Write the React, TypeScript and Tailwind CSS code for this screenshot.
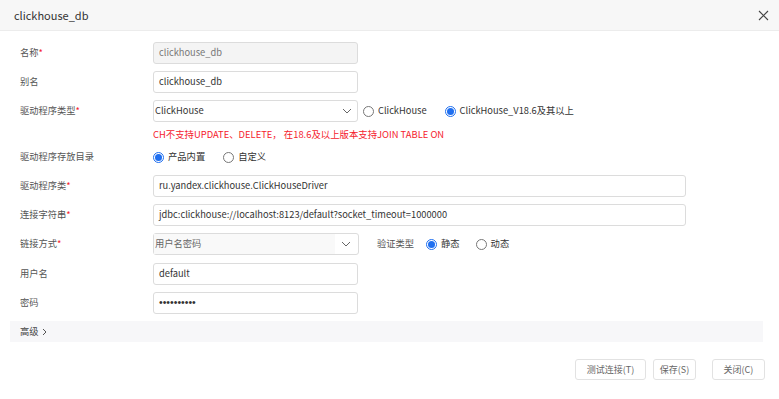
import React from "react";

const font = { fontFamily: '"Noto Sans CJK SC", "Noto Sans", sans-serif' };

function Chevron() {
  return (
    <svg width="10" height="6" viewBox="0 0 10 6" className="shrink-0">
      <path d="M1 1l4 4 4-4" fill="none" stroke="#666" strokeWidth="1" />
    </svg>
  );
}

function Radio({ checked, label }: { checked?: boolean; label: string }) {
  return (
    <span className="flex items-center gap-[4px] text-[9.3px] text-[#333]">
      {checked ? (
        <span className="w-[11px] h-[11px] rounded-full border border-[#1f6ff0] flex items-center justify-center">
          <span className="w-[7px] h-[7px] rounded-full bg-[#1f6ff0]" />
        </span>
      ) : (
        <span className="w-[11px] h-[11px] rounded-full border border-[#777] bg-white" />
      )}
      <span>{label}</span>
    </span>
  );
}

function Label({ text, req }: { text: string; req?: boolean }) {
  return (
    <div className="w-[153px] pl-[20px] shrink-0 text-[9.25px] text-[#555]">
      {text}
      {req && <span className="text-[#f5222d]">*</span>}
    </div>
  );
}

function Input({ value, w, disabled }: { value: string; w: string; disabled?: boolean }) {
  return (
    <div
      className={`${w} h-[22px] border border-[#dcdcdc] rounded-[3px] flex items-center px-[5px] text-[9.3px] ${
        disabled ? "bg-[#f4f4f4] text-[#777]" : "bg-white text-[#333]"
      }`}
    >
      {value}
    </div>
  );
}

export default function App() {
  return (
    <div className="w-[779px] h-[399px] bg-white relative overflow-hidden" style={font}>
      <div className="h-[31px] bg-[#f7f7f7] border-b border-[#ececec] flex items-center justify-between pl-[14px] pr-[10px]">
        <span className="text-[11px] text-[#333]">clickhouse_db</span>
        <svg width="11" height="11" viewBox="0 0 11 11">
          <path d="M1 1l9 9M10 1l-9 9" stroke="#444" strokeWidth="1.1" />
        </svg>
      </div>

      <div className="pt-[11px] flex flex-col items-start">
        <div className="flex items-center h-[22px]">
          <Label text="名称" req />
          <Input value="clickhouse_db" w="w-[205px]" disabled />
        </div>
        <div className="flex items-center h-[22px] mt-[7px]">
          <Label text="别名" />
          <Input value="clickhouse_db" w="w-[205px]" />
        </div>
        <div className="flex items-center h-[22px] mt-[7px]">
          <Label text="驱动程序类型" req />
          <div className="w-[205px] h-[22px] border border-[#dcdcdc] rounded-[3px] flex items-center justify-between pl-[1px] pr-[5px] text-[9.3px] text-[#333] bg-white">
            <span>ClickHouse</span>
            <Chevron />
          </div>
          <div className="ml-[5px] flex items-center gap-[18px]">
            <Radio label="ClickHouse" />
            <Radio checked label="ClickHouse_V18.6及其以上" />
          </div>
        </div>
        <div className="flex items-center h-[14px] mt-[5px]">
          <div className="w-[153px] shrink-0" />
          <span className="text-[9.4px] text-[#f5222d]">CH不支持UPDATE、DELETE， 在18.6及以上版本支持JOIN TABLE ON</span>
        </div>
        <div className="flex items-center h-[22px] mt-[5px]">
          <Label text="驱动程序存放目录" />
          <div className="flex items-center gap-[18px]">
            <Radio checked label="产品内置" />
            <Radio label="自定义" />
          </div>
        </div>
        <div className="flex items-center h-[22px] mt-[7px]">
          <Label text="驱动程序类" req />
          <Input value="ru.yandex.clickhouse.ClickHouseDriver" w="w-[533px]" />
        </div>
        <div className="flex items-center h-[22px] mt-[7px]">
          <Label text="连接字符串" req />
          <Input value="jdbc:clickhouse://localhost:8123/default?socket_timeout=1000000" w="w-[533px]" />
        </div>
        <div className="flex items-center h-[22px] mt-[7px]">
          <Label text="链接方式" req />
          <div className="w-[206px] h-[22px] border border-[#dcdcdc] rounded-[3px] flex items-center justify-between pr-[7px] text-[9.25px] text-[#666] bg-white">
            <span className="flex-1 h-full bg-[#f9f9f9] flex items-center pl-[1px] mr-[6px]">用户名密码</span>
            <Chevron />
          </div>
          <span className="ml-[18px] text-[9.25px] text-[#555]">验证类型</span>
          <div className="ml-[12px] flex items-center gap-[16px]">
            <Radio checked label="静态" />
            <Radio label="动态" />
          </div>
        </div>
        <div className="flex items-center h-[22px] mt-[8px]">
          <Label text="用户名" />
          <Input value="default" w="w-[205px]" />
        </div>
        <div className="flex items-center h-[22px] mt-[7px]">
          <Label text="密码" />
          <div className="w-[205px] h-[22px] border border-[#dcdcdc] rounded-[3px] flex items-center px-[5px] text-[10.5px] text-[#333] bg-white" style={{ fontFamily: '"Liberation Sans", sans-serif' }}>
            ••••••••••
          </div>
        </div>
        <div className="ml-[10px] w-[753px] mt-[7px] h-[21px] bg-[#f7f7f9] flex items-center pl-[10px] text-[9.25px] text-[#444] gap-[3px]">
          <span>高级</span>
          <svg width="6" height="8" viewBox="0 0 6 8">
            <path d="M1 1l3 3-3 3" fill="none" stroke="#555" strokeWidth="1" />
          </svg>
        </div>
        <div className="self-stretch flex justify-end gap-[7px] pr-[14px] mt-[17px]">
          <button className="w-[71px] h-[21px] border border-[#e2e2e2] rounded-[3px] bg-white text-[9px] text-[#666]">测试连接(T)</button>
          <button className="w-[43px] h-[21px] border border-[#e2e2e2] rounded-[3px] bg-white text-[9px] text-[#666]">保存(S)</button>
          <button className="w-[53px] h-[21px] border border-[#e2e2e2] rounded-[3px] bg-white text-[9px] text-[#666] ml-[9px]">关闭(C)</button>
        </div>
      </div>
    </div>
  );
}
